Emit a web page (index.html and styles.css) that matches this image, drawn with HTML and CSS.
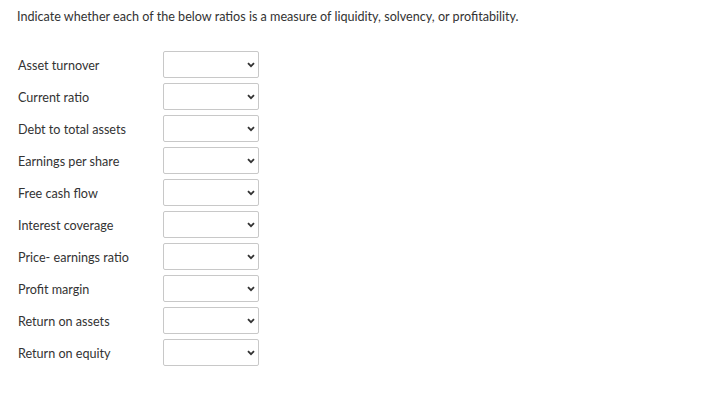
FILE: index.html
```html
<!DOCTYPE html>
<html>
<head>
<meta charset="utf-8">
<link rel="stylesheet" href="styles.css">
</head>
<body>
<p class="intro">Indicate whether each of the below ratios is a measure of liquidity, solvency, or profitability.</p>
<div class="rows">
  <div class="row"><span class="label">Asset turnover</span><div class="sel"><svg class="chev" viewBox="0 0 8 6" width="8" height="6"><path d="M1 1.2 L4 4.2 L7 1.2" fill="none" stroke="#333" stroke-width="1.8"/></svg></div></div>
  <div class="row"><span class="label">Current ratio</span><div class="sel"><svg class="chev" viewBox="0 0 8 6" width="8" height="6"><path d="M1 1.2 L4 4.2 L7 1.2" fill="none" stroke="#333" stroke-width="1.8"/></svg></div></div>
  <div class="row"><span class="label">Debt to total assets</span><div class="sel"><svg class="chev" viewBox="0 0 8 6" width="8" height="6"><path d="M1 1.2 L4 4.2 L7 1.2" fill="none" stroke="#333" stroke-width="1.8"/></svg></div></div>
  <div class="row"><span class="label">Earnings per share</span><div class="sel"><svg class="chev" viewBox="0 0 8 6" width="8" height="6"><path d="M1 1.2 L4 4.2 L7 1.2" fill="none" stroke="#333" stroke-width="1.8"/></svg></div></div>
  <div class="row"><span class="label">Free cash flow</span><div class="sel"><svg class="chev" viewBox="0 0 8 6" width="8" height="6"><path d="M1 1.2 L4 4.2 L7 1.2" fill="none" stroke="#333" stroke-width="1.8"/></svg></div></div>
  <div class="row"><span class="label">Interest coverage</span><div class="sel"><svg class="chev" viewBox="0 0 8 6" width="8" height="6"><path d="M1 1.2 L4 4.2 L7 1.2" fill="none" stroke="#333" stroke-width="1.8"/></svg></div></div>
  <div class="row"><span class="label">Price- earnings ratio</span><div class="sel"><svg class="chev" viewBox="0 0 8 6" width="8" height="6"><path d="M1 1.2 L4 4.2 L7 1.2" fill="none" stroke="#333" stroke-width="1.8"/></svg></div></div>
  <div class="row"><span class="label">Profit margin</span><div class="sel"><svg class="chev" viewBox="0 0 8 6" width="8" height="6"><path d="M1 1.2 L4 4.2 L7 1.2" fill="none" stroke="#333" stroke-width="1.8"/></svg></div></div>
  <div class="row"><span class="label">Return on assets</span><div class="sel"><svg class="chev" viewBox="0 0 8 6" width="8" height="6"><path d="M1 1.2 L4 4.2 L7 1.2" fill="none" stroke="#333" stroke-width="1.8"/></svg></div></div>
  <div class="row"><span class="label">Return on equity</span><div class="sel"><svg class="chev" viewBox="0 0 8 6" width="8" height="6"><path d="M1 1.2 L4 4.2 L7 1.2" fill="none" stroke="#333" stroke-width="1.8"/></svg></div></div>
</div>
</body>
</html>
```
FILE: styles.css
```css
html, body {
  margin: 0;
  padding: 0;
  background: #fff;
}
body {
  font-family: Lato, "Liberation Sans", sans-serif;
  color: #333;
  font-size: 12.6px;
}
.intro {
  margin: 0;
  padding: 9px 0 0 17px;
  line-height: 15px;
  font-size: 12.6px;
}
.rows {
  display: flex;
  flex-direction: column;
  gap: 5px;
  padding: 27px 0 0 18px;
}
.row {
  display: flex;
  align-items: center;
  height: 27px;
}
.label {
  width: 145px;
  font-size: 12.6px;
  padding-top: 1px;
}
.sel {
  box-sizing: border-box;
  width: 96px;
  height: 27px;
  border: 1px solid #c8c8c8;
  border-radius: 2px;
  display: flex;
  align-items: center;
  justify-content: flex-end;
  padding-right: 3px;
}
.chev {
  display: block;
}
```
